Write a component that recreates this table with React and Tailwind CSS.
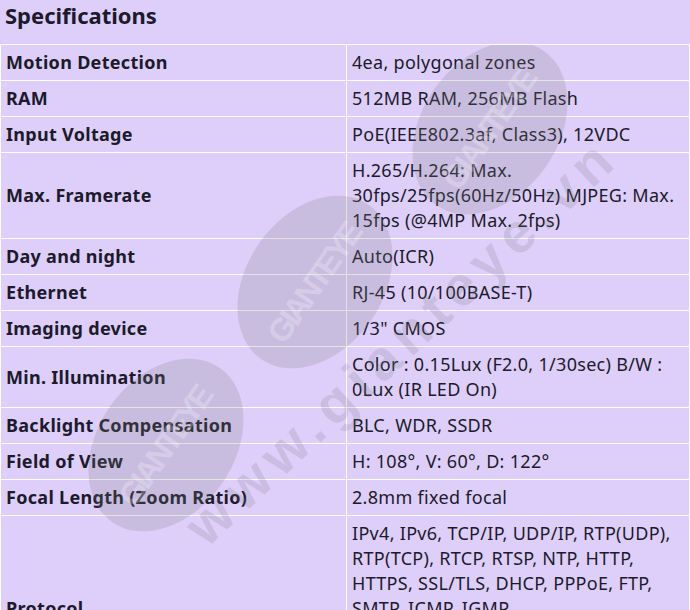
import React from 'react'

const specs = [
  ['Motion Detection', '4ea, polygonal zones'],
  ['RAM', '512MB RAM, 256MB Flash'],
  ['Input Voltage', 'PoE(IEEE802.3af, Class3), 12VDC'],
  ['Max. Framerate', 'H.265/H.264: Max. 30fps/25fps(60Hz/50Hz) MJPEG: Max. 15fps (@4MP Max. 2fps)'],
  ['Day and night', 'Auto(ICR)'],
  ['Ethernet', 'RJ-45 (10/100BASE-T)'],
  ['Imaging device', '1/3" CMOS'],
  ['Min. Illumination', 'Color : 0.15Lux (F2.0, 1/30sec) B/W : 0Lux (IR LED On)'],
  ['Backlight Compensation', 'BLC, WDR, SSDR'],
  ['Field of View', 'H: 108°, V: 60°, D: 122°'],
  ['Focal Length (Zoom Ratio)', '2.8mm fixed focal'],
  [
    'Protocol',
    'IPv4, IPv6, TCP/IP, UDP/IP, RTP(UDP), RTP(TCP), RTCP, RTSP, NTP, HTTP, HTTPS, SSL/TLS, DHCP, PPPoE, FTP, SMTP, ICMP, IGMP, SNMPv1/v2c/v3(MIB-2), ARP, DNS, DDNS, QoS, PIM-SM, UPnP, Bonjour, LLDP, SOCKS',
  ],
]

// faint logo bubbles of the site watermark
const bubbles = [
  { cx: 490, cy: 128 },
  { cx: 315, cy: 282 },
  { cx: 166, cy: 445 },
]

function Watermark() {
  return (
    <svg className="pointer-events-none absolute left-0 top-[45px]" width="690" height="565" viewBox="0 45 690 565">
      {bubbles.map((b, i) => (
        <g key={i} transform={`rotate(-55 ${b.cx} ${b.cy})`}>
          <ellipse cx={b.cx} cy={b.cy} rx="94" ry="68" fill="#7f7f7f" fillOpacity="0.22" />
          <text
            x={b.cx}
            y={b.cy + 11}
            textAnchor="middle"
            fontFamily="'Liberation Sans', sans-serif"
            fontWeight="700"
            fontSize="32"
            fill="#ffffff"
            fillOpacity="0.25"
            textLength="140"
          >
            GIANTEYE
          </text>
        </g>
      ))}
      <text
        x="400"
        y="362"
        textAnchor="middle"
        transform="rotate(-43 400 345)"
        fontFamily="'Liberation Sans', sans-serif"
        fontWeight="700"
        fontSize="56"
        fill="#7f7f7f"
        fillOpacity="0.2"
        textLength="560"
      >
        www.gianteye.vn
      </text>
    </svg>
  )
}

export default function App() {
  return (
    <div className="relative h-[610px] w-[690px] overflow-hidden bg-[#ddcffa] font-['Noto_Sans',sans-serif] text-[#1c1a2c]">
      <h2 className="h-[44px] px-[5px] pt-[1px] text-[22px] font-bold leading-[28px]">Specifications</h2>
      <table className="w-full border-collapse text-[18px] leading-[25px] tracking-[0.3px]">
        <tbody>
          {specs.map(([label, value]) => (
            <tr key={label}>
              <th className="w-[346px] border border-white px-[5px] py-[5px] text-left align-middle font-bold">{label}</th>
              <td className="border border-white px-[5px] py-[5px] align-middle">{value}</td>
            </tr>
          ))}
        </tbody>
      </table>
      <Watermark />
    </div>
  )
}
